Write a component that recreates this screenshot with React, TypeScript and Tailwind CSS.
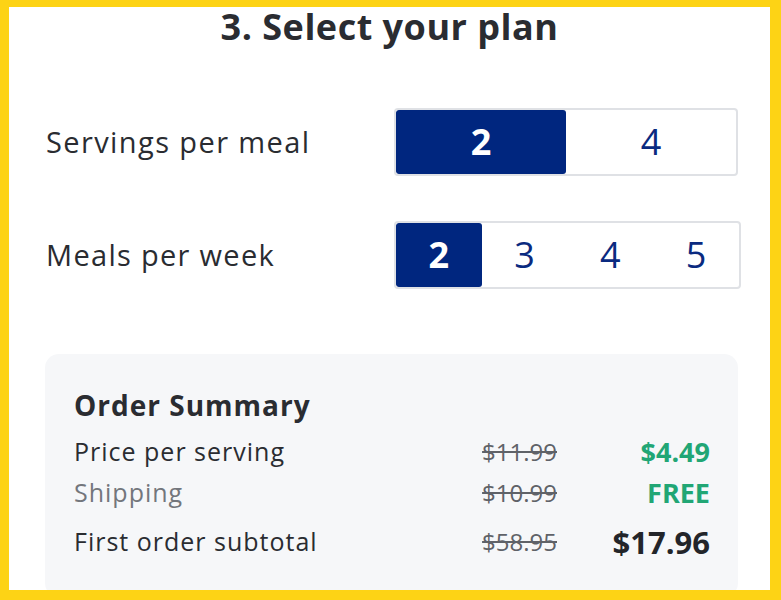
import React from 'react';

const font = { fontFamily: '"Open Sans", "Noto Sans", sans-serif' };

interface SegmentProps {
  options: number[];
  selected: number;
  cellWidth: string;
}

const Segment: React.FC<SegmentProps> = ({ options, selected, cellWidth }) => {
  return (
    <div className="flex h-[68px] rounded-[4px] border-2 border-[#dfe1e5] bg-white overflow-hidden">
      {options.map((n) => (
        <div
          key={n}
          className={`${cellWidth} flex items-center justify-center text-[36px] ${
            n === selected ? 'bg-[#00267f] text-white rounded-[3px] font-bold' : 'text-[#0a2a80] font-medium'
          }`}
        >
          {n}
        </div>
      ))}
    </div>
  );
};

interface SummaryRow {
  label: string;
  was: string;
  now: string;
  labelClass: string;
  nowClass: string;
}

const rows: SummaryRow[] = [
  { label: 'Price per serving', was: '$11.99', now: '$4.49', labelClass: 'text-[#2a2c31]', nowClass: 'text-[27px] text-[#21a675]' },
  { label: 'Shipping', was: '$10.99', now: 'FREE', labelClass: 'text-[#73767c]', nowClass: 'text-[27px] text-[#21a675]' },
  { label: 'First order subtotal', was: '$58.95', now: '$17.96', labelClass: 'text-[#2a2c31]', nowClass: 'text-[31px] text-[#23252a]' },
];

export default function App() {
  return (
    <div
      style={font}
      className="w-[781px] h-[600px] overflow-hidden bg-white border-[#fdd315] border-t-[7px] border-l-[9px] border-r-[11px] border-b-[10px]"
    >
      <h1 className="text-center text-[36px] leading-[40px] font-bold text-[#2a2c31] tracking-[0.5px]">3. Select your plan</h1>

      <div className="pl-[37px] pr-[32px]">
        <div className="flex items-center justify-between mt-[61px]">
          <span className="text-[29px] font-medium text-[#2a2c31] tracking-[1.4px]">Servings per meal</span>
          <div className="w-[344px]">
            <Segment options={[2, 4]} selected={2} cellWidth="w-[170px]" />
          </div>
        </div>

        <div className="flex items-center justify-between mt-[45px]">
          <span className="text-[29px] font-medium text-[#2a2c31] tracking-[1.3px]">Meals per week</span>
          <div className="w-[347px] -mr-[3px]">
            <Segment options={[2, 3, 4, 5]} selected={2} cellWidth="w-[86px]" />
          </div>
        </div>

        <div className="mt-[65px] -ml-px rounded-[14px] bg-[#f6f7f9] pl-[29px] pr-[28px] pt-[33px] pb-[30px]">
          <h2 className="text-[28px] leading-[36px] font-bold text-[#2a2c31] tracking-[1px]">Order Summary</h2>
          <div className="mt-[9px] flex flex-col">
            {rows.map((r, i) => (
              <div
                key={r.label}
                className={`flex items-center ${i === 2 ? 'h-[50px] mt-[4px]' : 'h-[40px]'} ${i === 1 ? 'mt-[1px]' : ''}`}
              >
                <span className={`flex-1 text-[25px] font-medium tracking-[1px] ${r.labelClass}`}>{r.label}</span>
                <span className="text-[24px] font-medium text-[#5f6268] line-through text-right">{r.was}</span>
                <span className={`w-[153px] text-right font-bold ${r.nowClass}`}>{r.now}</span>
              </div>
            ))}
          </div>
        </div>
      </div>
    </div>
  );
}
